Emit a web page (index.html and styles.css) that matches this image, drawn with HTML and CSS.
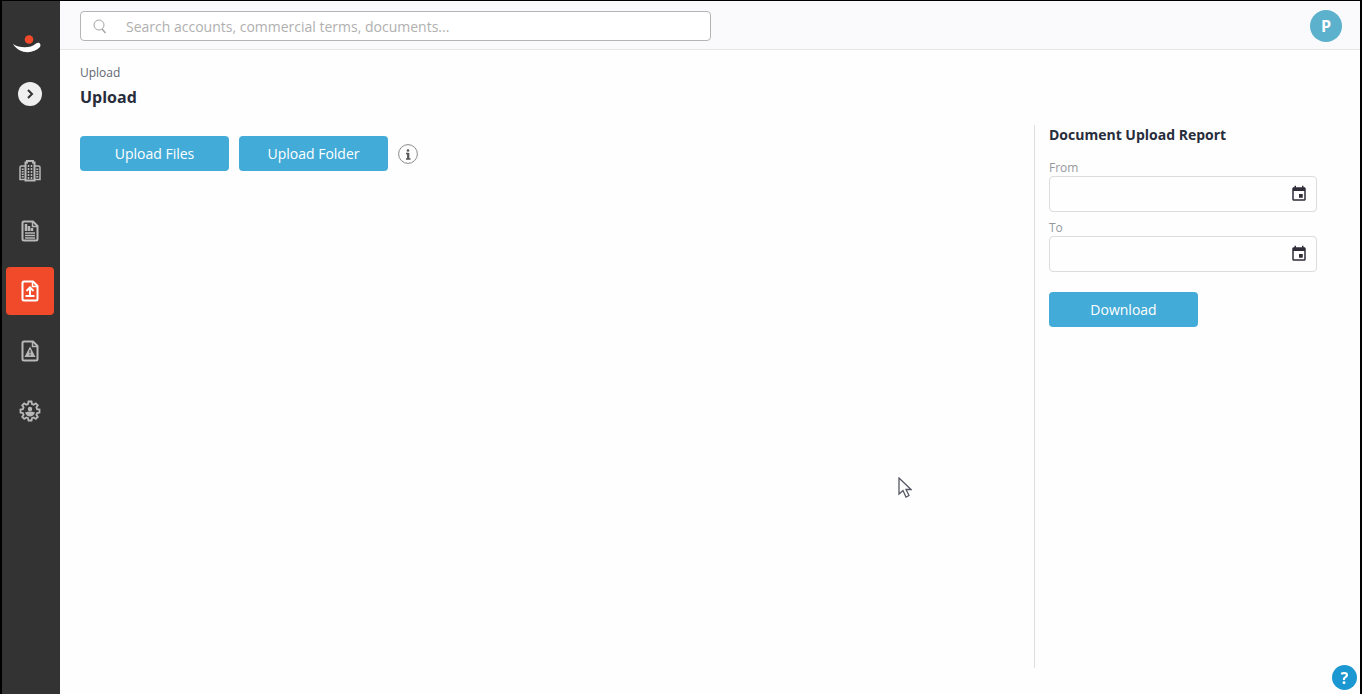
FILE: index.html
```html
<!DOCTYPE html>
<html lang="en">

<head>
    <meta charset="UTF-8">
    <meta name="viewport" content="width=device-width, initial-scale=1.0">
    <title>Upload</title>
    <link rel="stylesheet" href="styles.css">
</head>

<body>
    <aside class="sidebar">
        <a href="#" class="logo" aria-label="Home">
            <svg width="30" height="20" viewBox="0 0 30 20">
                <circle cx="16" cy="4.500" r="4.300" fill="#f04a2a" />
                <path d="M0 9C6 13 17 14 23 8.500C26 6.500 28.500 9 27 12C20 19.500 6 19 0 9Z" fill="#fff" />
            </svg>
        </a>
        <button type="button" class="toggle" aria-label="Expand menu">
            <svg width="24" height="24" viewBox="0 0 24 24" fill="none" stroke="#333" stroke-width="2">
                <path d="M10 8l4 4-4 4" />
            </svg>
        </button>
        <nav class="menu">
            <a href="#" class="menu-item" aria-label="Accounts">
                <svg width="22" height="22" viewBox="0 0 22 22" fill="none" stroke="currentColor">
                    <path d="M6.500 19.500H1V7.500Q1 6 2.500 6H6.500M15.500 6H19.500Q21 6 21 7.500V19.500H15.500" stroke-width="1.500" />
                    <path d="M6.500 20.500V2.500H8V1H14V2.500H15.500V20.500Z" stroke-width="2" />
                    <path d="M9.500 5V19M12.500 5V19" stroke-width="1.500" stroke-dasharray="2 1" />
                    <path d="M3.700 8.500V18M18.300 8.500V18" stroke-width="2" stroke-dasharray="1.500 1" />
                </svg>
            </a>
            <a href="#" class="menu-item" aria-label="Documents">
                <svg width="22" height="22" viewBox="0 0 22 22" fill="none" stroke="currentColor" stroke-width="1.500">
                    <path d="M5 1.500H14L18.500 6V19Q18.500 20.500 17 20.500H5Q3.500 20.500 3.500 19V3Q3.500 1.500 5 1.500Z" stroke-width="2" />
                    <path d="M13.500 2V6.500H18" />
                    <path d="M7 4V11M10 6V11M13 8V11" stroke-width="2.500" />
                    <path d="M6 13H16M6 15.500H16M6 18H16" />
                </svg>
            </a>
            <a href="#" class="menu-item active" aria-label="Upload" aria-current="page">
                <svg width="22" height="22" viewBox="0 0 22 22" fill="none" stroke="currentColor" stroke-width="2">
                    <path d="M5 1.500H14L18.500 6V19Q18.500 20.500 17 20.500H5Q3.500 20.500 3.500 19V3Q3.500 1.500 5 1.500Z" />
                    <path d="M13.500 2V6.500H18" stroke-width="1.500" />
                    <path d="M11 15.500V8M7.500 11L11 7.500L14.500 11M6.500 16H15.500" />
                </svg>
            </a>
            <a href="#" class="menu-item" aria-label="Alerts">
                <svg width="22" height="22" viewBox="0 0 22 22" fill="none" stroke="currentColor" stroke-width="1.500">
                    <path d="M5 1.500H14L18.500 6V19Q18.500 20.500 17 20.500H5Q3.500 20.500 3.500 19V3Q3.500 1.500 5 1.500Z" stroke-width="2" />
                    <path d="M13.500 2V6.500H18" />
                    <path d="M11 6.500L16.500 17H5.500Z" fill="currentColor" stroke="none" />
                    <path d="M11 10V13.300M11 14.300V15.500" stroke="#333" stroke-width="1.200" />
                </svg>
            </a>
            <a href="#" class="menu-item" aria-label="Settings">
                <svg width="22" height="22" viewBox="0 0 22 22" fill="none" stroke="currentColor" stroke-width="1.800">
                    <path d="M9.500 1.500h3l.5 2.500 1.700.7 2.100-1.400 2 2-1.400 2.100.7 1.700 2.400.5v3l-2.400.5-.7 1.700 1.400 2.100-2 2-2.100-1.400-1.700.7-.5 2.300h-3l-.5-2.300-1.700-.7-2.100 1.400-2-2 1.400-2.100-.7-1.700-2.400-.5v-3l2.400-.5.7-1.700-1.400-2.100 2-2 2.100 1.400 1.700-.7Z" />
                    <circle cx="11" cy="9" r="2.200" fill="currentColor" stroke="none" />
                    <path d="M6 12.500Q11 10.500 16 12.500Q14.500 16.500 11 16.500Q7.500 16.500 6 12.500Z" fill="currentColor" stroke="none" />
                </svg>
            </a>
        </nav>
    </aside>

    <div class="page">
        <header class="topbar">
            <label class="search">
                <svg width="14" height="16" viewBox="0 0 14 16" fill="none" stroke="#a5a5a5">
                    <circle cx="6" cy="7" r="5" />
                    <path d="M9 11l3.500 4" stroke-width="1.500" />
                </svg>
                <input type="search" aria-label="Search" placeholder="Search accounts, commercial terms, documents...">
            </label>
            <button type="button" class="avatar">P</button>
        </header>

        <main class="content">
            <a href="#" class="breadcrumb">Upload</a>
            <h1>Upload</h1>
            <div class="columns">
                <section class="actions">
                    <button type="button" class="btn">Upload Files</button>
                    <button type="button" class="btn">Upload Folder</button>
                    <button type="button" class="info" aria-label="Information">
                        <svg width="20" height="20" viewBox="0 0 20 20" fill="none" stroke="#555">
                            <circle cx="10" cy="10" r="9.400" stroke="#8a8a8a" />
                            <circle cx="10" cy="6.500" r="1.300" fill="#555" stroke="none" />
                            <path d="M8 9.500H10V14.500M8 15H12.500" stroke-width="1.500" />
                            <path d="M10.300 9V15" stroke-width="2" />
                        </svg>
                    </button>
                </section>
                <form class="report">
                    <h2>Document Upload Report</h2>
                    <label for="from">From</label>
                    <div class="date-field">
                        <input type="text" id="from">
                        <button type="button" aria-label="Pick start date">
                            <svg width="18" height="18" viewBox="0 0 24 24" fill="#302d38">
                                <path d="M17 12h-5v5h5v-5zM16 1v2H8V1H6v2H5c-1.110 0-2 .9-2 2v14c0 1.100.89 2 2 2h14c1.100 0 2-.9 2-2V5c0-1.100-.9-2-2-2h-1V1h-2zm3 18H5V8h14v11z" />
                            </svg>
                        </button>
                    </div>
                    <label for="to">To</label>
                    <div class="date-field">
                        <input type="text" id="to">
                        <button type="button" aria-label="Pick end date">
                            <svg width="18" height="18" viewBox="0 0 24 24" fill="#302d38">
                                <path d="M17 12h-5v5h5v-5zM16 1v2H8V1H6v2H5c-1.110 0-2 .9-2 2v14c0 1.100.89 2 2 2h14c1.100 0 2-.9 2-2V5c0-1.100-.9-2-2-2h-1V1h-2zm3 18H5V8h14v11z" />
                            </svg>
                        </button>
                    </div>
                    <button type="button" class="btn download">Download</button>
                </form>
            </div>
        </main>
    </div>

    <button type="button" class="help" aria-label="Help">?</button>
    <svg class="cursor" width="14" height="22" viewBox="0 0 14 22">
        <path d="M1 1V17L5 13.500L8 20L11 18.500L8 12.500H13Z" fill="#fff" stroke="#555862" stroke-width="1.300" />
    </svg>
</body>

</html>
```
FILE: styles.css
```css
:root {
    --blue: #43abd7;
    --dark: #333333;
    --red: #f04a2a;
    --text: #272d3b;
}

* {
    box-sizing: border-box;
}

body {
    display: flex;
    min-height: 100vh;
    margin: 0;
    border: solid #000;
    border-width: 1px 2px 0;
    background-color: #fefefe;
    color: var(--text);
    font-family: "Open Sans", sans-serif;
    font-size: 14px;
}

button,
input {
    font-family: inherit;
    font-size: inherit;
}

button {
    padding: 0;
    border: none;
    background: none;
    cursor: pointer;
}

a {
    color: inherit;
    text-decoration: none;
}

svg {
    display: block;
}

.sidebar {
    display: flex;
    flex-direction: column;
    align-items: center;
    width: 58px;
    padding: 34px 6px 0 4px;
    background-color: var(--dark);
}

.logo {
    margin-right: 4px;
}

.toggle {
    margin-top: 27px;
    border-radius: 50%;
    background-color: #efefef;
}

.menu {
    display: grid;
    gap: 12px;
    margin-top: 41px;
}

.menu-item {
    display: flex;
    align-items: center;
    justify-content: center;
    width: 48px;
    height: 48px;
    border-radius: 4px;
    color: #b8b8b8;
}

.menu-item.active {
    background-color: var(--red);
    color: #ffffff;
}

.page {
    display: flex;
    flex: 1;
    flex-direction: column;
}

.topbar {
    display: flex;
    align-items: center;
    justify-content: space-between;
    height: 49px;
    padding: 2px 18px 0 20px;
    border-bottom: 1px solid #e6e6e8;
    background-color: #fafafc;
}

.search {
    display: flex;
    align-items: center;
    gap: 19px;
    width: 50%;
    height: 30px;
    padding: 0 12px;
    border: 1px solid #b5b5b5;
    border-radius: 4px;
    background-color: #ffffff;
}

.search input {
    flex: 1;
    padding: 0;
    border: none;
    outline: none;
    background: none;
}

.search input::placeholder {
    color: #b0b0b0;
}

.avatar {
    width: 32px;
    height: 32px;
    border-radius: 50%;
    background-color: #5cb1cc;
    color: #ffffff;
    font-size: 16px;
    font-weight: 700;
}

.content {
    display: flex;
    flex: 1;
    flex-direction: column;
    padding: 15px 18px 26px 20px;
}

.breadcrumb {
    color: #62666e;
    font-size: 12px;
    line-height: 16px;
}

h1 {
    margin: 4px 0 16px;
    font-size: 16px;
    font-weight: 700;
    line-height: 24px;
}

.columns {
    display: flex;
    flex: 1;
}

.actions {
    display: flex;
    flex: 1;
    align-items: center;
    align-self: flex-start;
    gap: 10px;
    padding-top: 11px;
}

.btn {
    width: 149px;
    height: 35px;
    border-radius: 4px;
    background-color: var(--blue);
    color: #ffffff;
}

.report {
    display: flex;
    flex-direction: column;
    align-items: stretch;
    width: 308px;
    padding: 0 25px 0 14px;
    border-left: 1px solid #dedee2;
}

h2 {
    margin: 0 0 15px;
    font-size: 14px;
    font-weight: 700;
    line-height: 20px;
}

.report label {
    color: #95989d;
    font-size: 12px;
    line-height: 16px;
}

.date-field {
    display: flex;
    height: 36px;
    margin-bottom: 8px;
    border: 1px solid #dcdce0;
    border-radius: 4px;
}

.date-field input {
    flex: 1;
    min-width: 0;
    padding: 0 12px;
    border: none;
    outline: none;
    background: none;
}

.date-field button {
    padding: 0 8px;
}

.download {
    margin-top: 12px;
}

.help {
    position: fixed;
    right: 5px;
    bottom: 4px;
    width: 25px;
    height: 25px;
    border-radius: 50%;
    background-color: #1b98d1;
    color: #ffffff;
    font-size: 16px;
    font-weight: 700;
}

.cursor {
    position: fixed;
    top: 477px;
    left: 898px;
    pointer-events: none;
}
```
